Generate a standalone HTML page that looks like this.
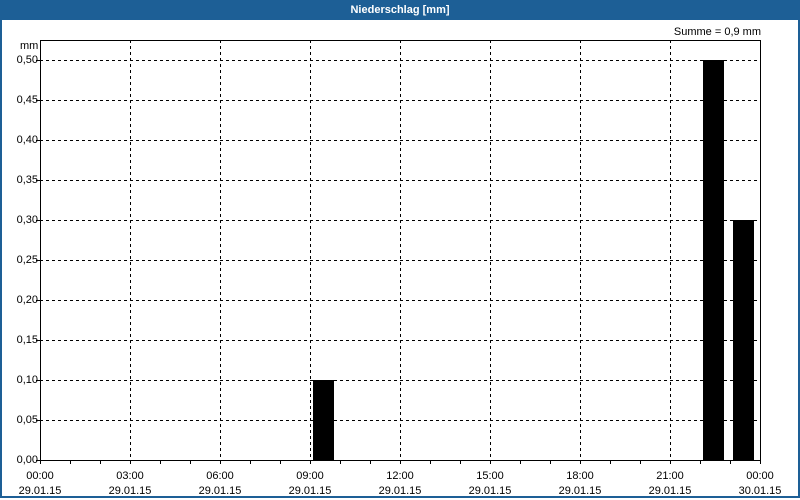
<!DOCTYPE html><html><head><style>
body{margin:0;width:800px;height:500px;overflow:hidden;background:#fff;font-family:"Liberation Sans",sans-serif;}
.frame{position:absolute;left:0;top:0;width:796px;height:496px;border:2px solid #1d5f96;border-top:none;}
.hdr{position:absolute;left:0;top:0;width:800px;height:20px;background:#1d5f96;color:#fff;font-weight:bold;font-size:11px;text-align:center;line-height:20px;}
.t{position:absolute;font-size:11px;color:#000;}
</style></head><body>
<div class="frame"></div>
<div class="hdr">Niederschlag [mm]</div>
<svg width="800" height="500" style="position:absolute;left:0;top:0">
<g stroke="#000" stroke-width="1" stroke-dasharray="3,3" shape-rendering="crispEdges">
<line x1="130.5" y1="40" x2="130.5" y2="460"/><line x1="220.5" y1="40" x2="220.5" y2="460"/><line x1="310.5" y1="40" x2="310.5" y2="460"/><line x1="400.5" y1="40" x2="400.5" y2="460"/><line x1="490.5" y1="40" x2="490.5" y2="460"/><line x1="580.5" y1="40" x2="580.5" y2="460"/><line x1="670.5" y1="40" x2="670.5" y2="460"/>
<line x1="40" y1="60.5" x2="760" y2="60.5"/><line x1="40" y1="100.5" x2="760" y2="100.5"/><line x1="40" y1="140.5" x2="760" y2="140.5"/><line x1="40" y1="180.5" x2="760" y2="180.5"/><line x1="40" y1="220.5" x2="760" y2="220.5"/><line x1="40" y1="260.5" x2="760" y2="260.5"/><line x1="40" y1="300.5" x2="760" y2="300.5"/><line x1="40" y1="340.5" x2="760" y2="340.5"/><line x1="40" y1="380.5" x2="760" y2="380.5"/><line x1="40" y1="420.5" x2="760" y2="420.5"/>
</g>
<g fill="#000" shape-rendering="crispEdges">
<rect x="313" y="380" width="21" height="80"/><rect x="703" y="60" width="21" height="400"/><rect x="733" y="220" width="21" height="240"/>
</g>
<rect x="40.5" y="40.5" width="720" height="420" fill="none" stroke="#000" shape-rendering="crispEdges"/>
<g stroke="#000" shape-rendering="crispEdges">
<path d="M40.5 461v3M70.5 461v3M100.5 461v3M130.5 461v3M160.5 461v3M190.5 461v3M220.5 461v3M250.5 461v3M280.5 461v3M310.5 461v3M340.5 461v3M370.5 461v3M400.5 461v3M430.5 461v3M460.5 461v3M490.5 461v3M520.5 461v3M550.5 461v3M580.5 461v3M610.5 461v3M640.5 461v3M670.5 461v3M700.5 461v3M730.5 461v3M760.5 461v3"/>
<path d="M36 60.5h4M36 100.5h4M36 140.5h4M36 180.5h4M36 220.5h4M36 260.5h4M36 300.5h4M36 340.5h4M36 380.5h4M36 420.5h4M36 460.5h4"/>
</g>
</svg>
<div class="t" style="left:20px;top:40px">mm</div>
<div class="t" style="right:762px;top:54px">0,50</div>
<div class="t" style="right:762px;top:94px">0,45</div>
<div class="t" style="right:762px;top:134px">0,40</div>
<div class="t" style="right:762px;top:174px">0,35</div>
<div class="t" style="right:762px;top:214px">0,30</div>
<div class="t" style="right:762px;top:254px">0,25</div>
<div class="t" style="right:762px;top:294px">0,20</div>
<div class="t" style="right:762px;top:334px">0,15</div>
<div class="t" style="right:762px;top:374px">0,10</div>
<div class="t" style="right:762px;top:414px">0,05</div>
<div class="t" style="right:762px;top:454px">0,00</div>
<div class="t" style="right:39px;top:26px">Summe = 0,9 mm</div>
<div class="t" style="left:0;width:80px;text-align:center;top:469px;line-height:15px">00:00<br>29.01.15</div>
<div class="t" style="left:90px;width:80px;text-align:center;top:469px;line-height:15px">03:00<br>29.01.15</div>
<div class="t" style="left:180px;width:80px;text-align:center;top:469px;line-height:15px">06:00<br>29.01.15</div>
<div class="t" style="left:270px;width:80px;text-align:center;top:469px;line-height:15px">09:00<br>29.01.15</div>
<div class="t" style="left:360px;width:80px;text-align:center;top:469px;line-height:15px">12:00<br>29.01.15</div>
<div class="t" style="left:450px;width:80px;text-align:center;top:469px;line-height:15px">15:00<br>29.01.15</div>
<div class="t" style="left:540px;width:80px;text-align:center;top:469px;line-height:15px">18:00<br>29.01.15</div>
<div class="t" style="left:630px;width:80px;text-align:center;top:469px;line-height:15px">21:00<br>29.01.15</div>
<div class="t" style="left:720px;width:80px;text-align:center;top:469px;line-height:15px">00:00<br>30.01.15</div>
</body></html>
